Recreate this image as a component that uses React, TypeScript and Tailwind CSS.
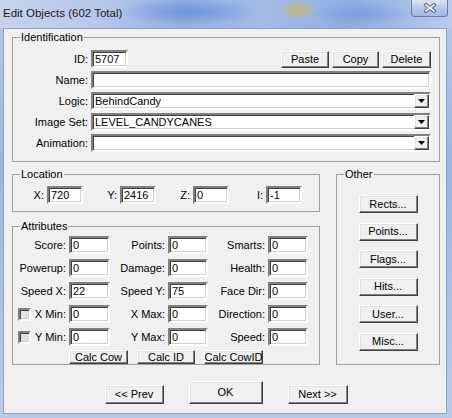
import React from "react";

const sunken =
  "border-2 border-t-[#808080] border-l-[#808080] border-b-white border-r-white shadow-[inset_1px_1px_0_#404040,inset_-1px_-1px_0_#d4d0c8]";
const raised =
  "border border-t-white border-l-white border-b-[#404040] border-r-[#404040] shadow-[inset_-1px_-1px_0_#808080,inset_1px_1px_0_#e3e3e3] bg-[#f0f0f0]";

function Input({ value = "", className = "" }: { value?: string; className?: string }) {
  return (
    <div className={`${sunken} bg-white h-[18px] flex items-center pl-[2px] leading-none whitespace-nowrap ${className}`}>
      {value}
    </div>
  );
}

function Combo({ value = "" }: { value?: string }) {
  return (
    <div className={`${sunken} bg-white h-[18px] flex-1 flex items-center pl-[2px] leading-none`}>
      <span className="flex-1">{value}</span>
      <div className={`${raised} w-[15px] h-full flex items-center justify-center`}>
        <svg width="7" height="4" viewBox="0 0 7 4">
          <path d="M0 0 H7 L3.5 4 Z" fill="#000" />
        </svg>
      </div>
    </div>
  );
}

function Btn({ label, className = "" }: { label: string; className?: string }) {
  return (
    <div className={`${raised} flex items-center justify-center leading-none whitespace-nowrap ${className}`}>
      {label}
    </div>
  );
}

function Group({ title, className = "", children }: { title: string; className?: string; children: React.ReactNode }) {
  return (
    <fieldset className={`border border-[#a0a0a0] ${className}`}>
      <legend className="ml-[7px] px-[1px] leading-[13px]">{title}</legend>
      {children}
    </fieldset>
  );
}

function Check() {
  return <div className={`${sunken} bg-[#e2e2e2] w-[13px] h-[13px] ml-[5px] shrink-0`} />;
}

const attrRows = [
  ["Score:", "0", "Points:", "0", "Smarts:", "0"],
  ["Powerup:", "0", "Damage:", "0", "Health:", "0"],
  ["Speed X:", "22", "Speed Y:", "75", "Face Dir:", "0"],
  ["X Min:", "0", "X Max:", "0", "Direction:", "0"],
  ["Y Min:", "0", "Y Max:", "0", "Speed:", "0"],
];

export default function App() {
  return (
    <div className="w-[452px] h-[418px] flex flex-col bg-[linear-gradient(180deg,#b6c9e8,#9db6de_40%,#b9cbe9)] text-[11px] text-black font-['Liberation_Sans',Arial,sans-serif] overflow-hidden">
      {/* Title bar */}
      <div className="h-[28px] shrink-0 flex items-start bg-[radial-gradient(20px_10px_at_298px_10px,#c9bb74,rgba(201,187,116,0)),radial-gradient(70px_14px_at_190px_12px,#6f95d8,rgba(111,149,216,0)),radial-gradient(50px_12px_at_360px_14px,#7da1dd,rgba(125,161,221,0)),linear-gradient(90deg,#c7d5ec_0%,#b5c8e9_22%,#94b2e3_40%,#a3bde7_58%,#8eaee2_78%,#b9ccec_100%)]">
        <div className="flex-1 h-full flex items-center pl-[3px] text-[11.5px] text-[#1c1c1c]">
          Edit Objects (602 Total)
        </div>
        <div className="w-[37px] h-[17px] mr-[4px] rounded-b-[4px] border border-t-0 border-[#6a7fa3] bg-[linear-gradient(180deg,#dce6f5,#b3c7e8_55%,#a2bae2)] flex items-center justify-center">
          <svg width="14" height="10" viewBox="0 0 14 10">
            <path d="M3 2 L11 8 M11 2 L3 8" stroke="#4a5a78" strokeWidth="3.6" strokeLinecap="square" />
            <path d="M3 2 L11 8 M11 2 L3 8" stroke="#ffffff" strokeWidth="1.8" strokeLinecap="square" />
          </svg>
        </div>
      </div>

      {/* Client area */}
      <div className="flex-1 ml-[3px] mr-[5px] mb-[4px] bg-[#f0f0f0] border border-[#8da2c4] pt-[2px] pl-[8px] pr-[6px] flex flex-col">
        {/* Identification */}
        <Group title="Identification" className="w-[428px]">
          <div className="pt-[6px] pb-[9px] pr-[8px] flex flex-col gap-[3px]">
            <div className="flex items-center h-[18px]">
              <span className="w-[78px] text-right pr-[3px]">ID:</span>
              <Input value="5707" className="w-[37px]" />
              <div className="ml-auto flex gap-[3px]">
                <Btn label="Paste" className="w-[48px] h-[17px]" />
                <Btn label="Copy" className="w-[47px] h-[17px]" />
                <Btn label="Delete" className="w-[49px] h-[17px]" />
              </div>
            </div>
            <div className="flex items-center h-[18px]">
              <span className="w-[78px] text-right pr-[3px]">Name:</span>
              <Input className="flex-1" />
            </div>
            <div className="flex items-center h-[18px]">
              <span className="w-[78px] text-right pr-[3px]">Logic:</span>
              <Combo value="BehindCandy" />
            </div>
            <div className="flex items-center h-[18px]">
              <span className="w-[78px] text-right pr-[3px]">Image Set:</span>
              <Combo value="LEVEL_CANDYCANES" />
            </div>
            <div className="flex items-center h-[18px]">
              <span className="w-[78px] text-right pr-[3px]">Animation:</span>
              <Combo />
            </div>
          </div>
        </Group>

        <div className="mt-[6px] flex gap-[16px]">
          <div className="w-[308px] flex flex-col gap-[8px]">
            {/* Location */}
            <Group title="Location">
              <div className="pt-[5px] pb-[7px] flex gap-[3px]">
                {[
                  ["X:", "720"],
                  ["Y:", "2416"],
                  ["Z:", "0"],
                  ["I:", "-1"],
                ].map(([l, v]) => (
                  <div key={l} className="flex items-center h-[18px]">
                    <span className="w-[34px] text-right pr-[3px]">{l}</span>
                    <Input value={v} className="w-[36px]" />
                  </div>
                ))}
              </div>
            </Group>

            {/* Attributes */}
            <Group title="Attributes">
              <div className="pt-[3px] flex flex-col">
                <div className="grid grid-cols-[56px_41px_58px_40px_60px_40px] gap-y-[5px] items-center">
                  {attrRows.map((r, i) => (
                    <React.Fragment key={i}>
                      {i >= 3 ? (
                        <div className="flex items-center h-[18px]">
                          <Check />
                          <span className="flex-1 text-right pr-[3px]">{r[0]}</span>
                        </div>
                      ) : (
                        <span className="text-right pr-[3px]">{r[0]}</span>
                      )}
                      <Input value={r[1]} />
                      <span className="text-right pr-[3px]">{r[2]}</span>
                      <Input value={r[3]} />
                      <span className="text-right pr-[3px]">{r[4]}</span>
                      <Input value={r[5]} />
                    </React.Fragment>
                  ))}
                </div>
                <div className="mt-[4px] pl-[56px] flex gap-[9px]">
                  <Btn label="Calc Cow" className="w-[59px] h-[14px]" />
                  <Btn label="Calc ID" className="w-[58px] h-[14px]" />
                  <Btn label="Calc CowID" className="w-[59px] h-[14px]" />
                </div>
              </div>
            </Group>
          </div>

          {/* Other */}
          <Group title="Other" className="w-[104px]">
            <div className="pt-[14px] flex flex-col items-center gap-[9.5px]">
              {["Rects...", "Points...", "Flags...", "Hits...", "User...", "Misc..."].map((b) => (
                <Btn key={b} label={b} className="w-[59px] h-[18px]" />
              ))}
            </div>
          </Group>
        </div>

        {/* Dialog buttons */}
        <div className="mt-[16px] flex justify-center items-start gap-[25px]">
          <Btn label="<< Prev" className="w-[59px] h-[19px] mt-[4px]" />
          <Btn label="OK" className="w-[74px] h-[23px]" />
          <Btn label="Next >>" className="w-[60px] h-[19px] mt-[4px]" />
        </div>
      </div>
    </div>
  );
}
